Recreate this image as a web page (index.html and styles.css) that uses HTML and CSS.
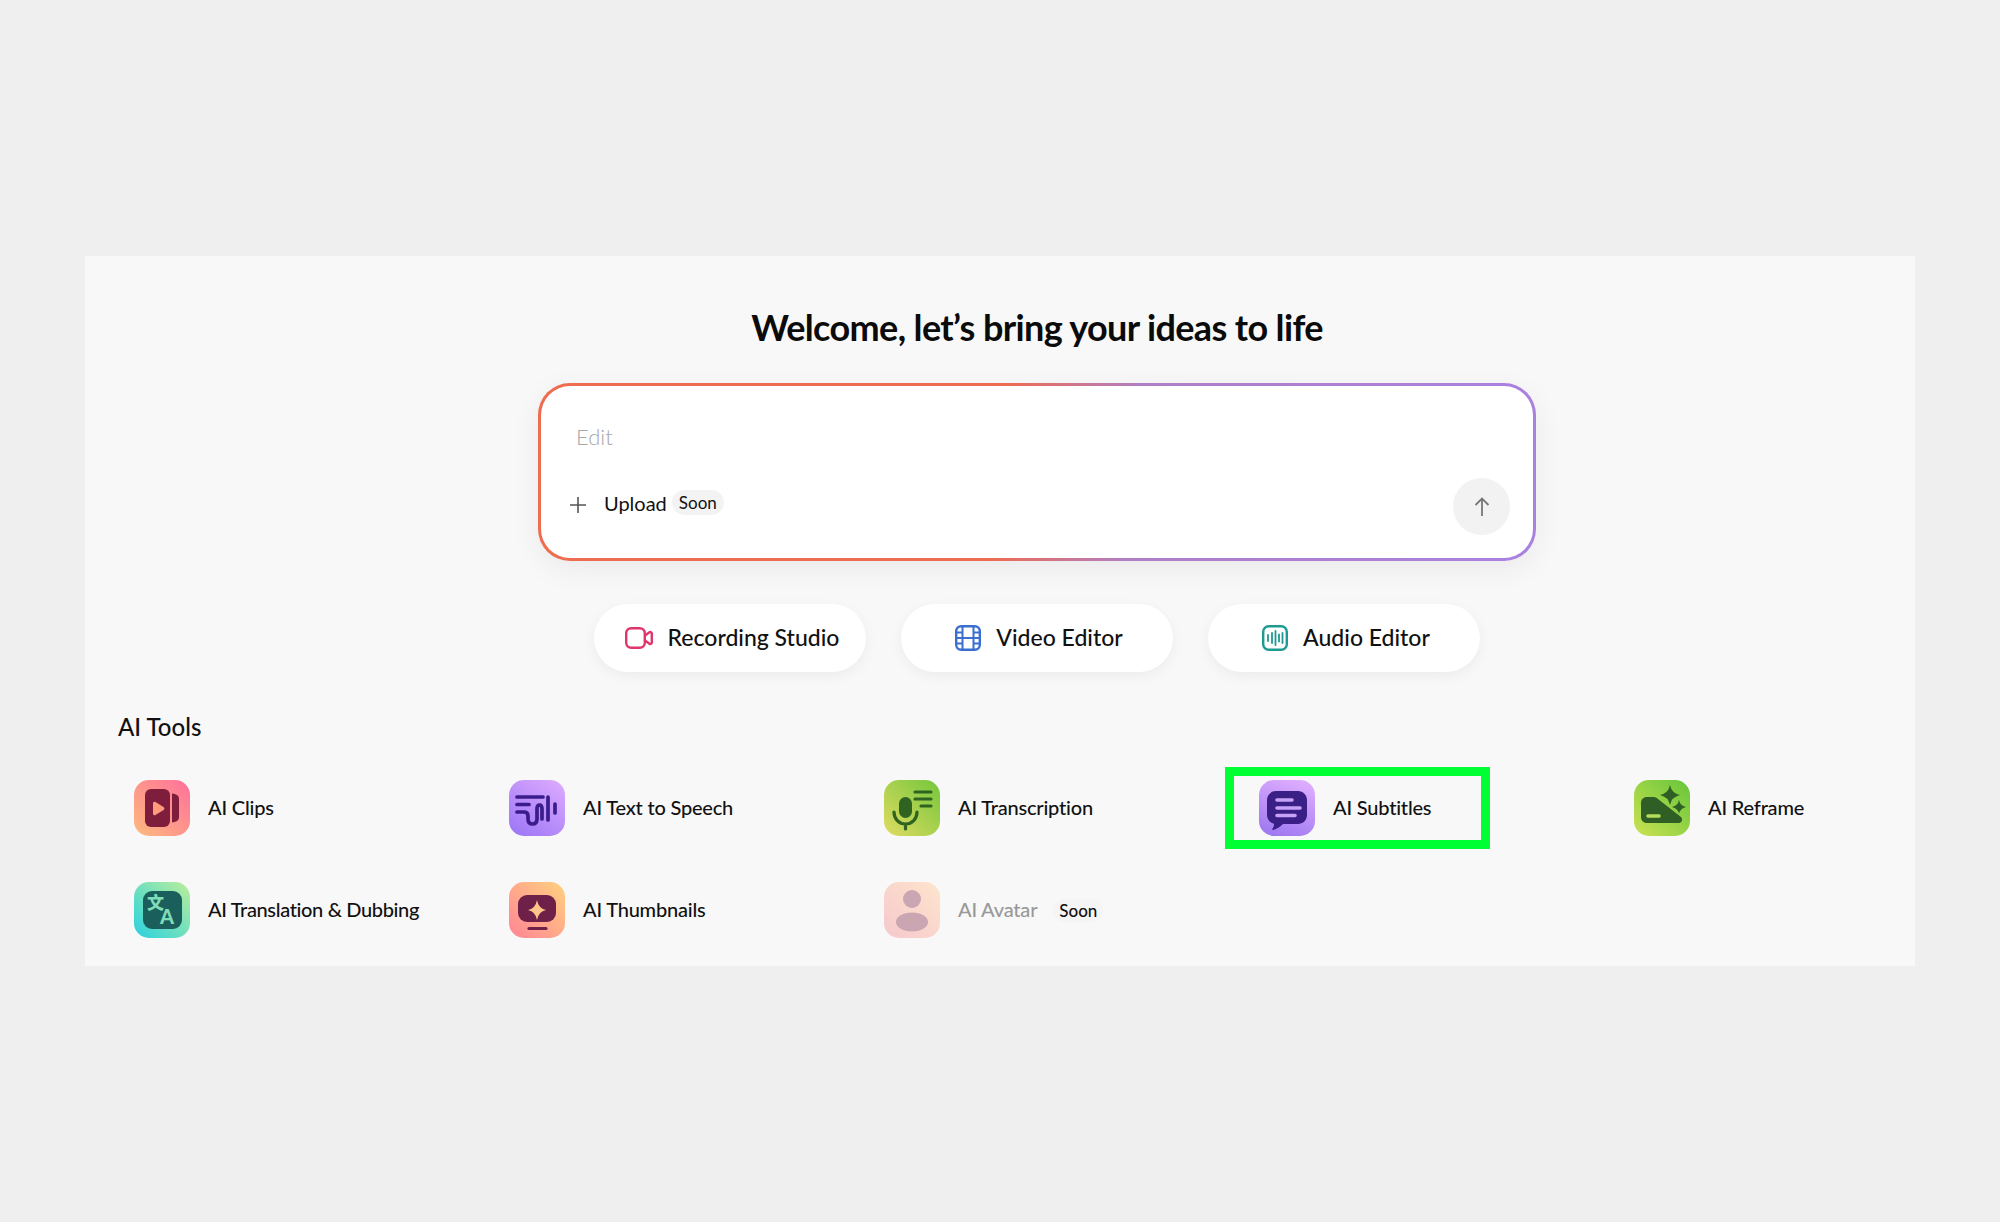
FILE: index.html
```html
<!DOCTYPE html>
<html lang="en">
<head>
    <meta charset="UTF-8">
    <title>Welcome</title>
    <link rel="stylesheet" href="styles.css">
</head>
<body>
    <div class="panel">
        <div class="hero">
            <h1>Welcome, let’s bring your ideas to life</h1>
            <div class="prompt">
                <div class="prompt-input">Edit</div>
                <div class="prompt-bottom">
                    <div class="upload">
                        <svg class="plus" width="18" height="18" viewBox="0 0 18 18"><path d="M9 1v16M1 9h16"/></svg>
                        <span>Upload</span>
                        <span class="soon">Soon</span>
                    </div>
                    <div class="send">
                        <svg width="16" height="20" viewBox="0 0 16 20"><path d="M8 19V1.500M1.500 8L8 1.500 14.500 8"/></svg>
                    </div>
                </div>
            </div>
            <div class="shortcuts">
                <div class="shortcut">
                    <svg class="rec" width="28" height="22" viewBox="0 0 28 22"><rect x="1.200" y="1.200" width="18.600" height="19.600" rx="5"/><path d="M20 8.500l4.500-3.200c1-.7 2.300 0 2.300 1.200v9c0 1.200-1.300 1.900-2.300 1.200L20 13.500"/></svg>
                    <span>Recording Studio</span>
                </div>
                <div class="shortcut">
                    <svg class="film" width="26" height="26" viewBox="0 0 26 26"><rect x="1.200" y="1.200" width="23.600" height="23.600" rx="5"/><path d="M7.500 1.500v23M18.500 1.500v23M7.500 13h11M1.500 7.500h6M1.500 13h6M1.500 18.500h6M18.500 7.500h6M18.500 13h6M18.500 18.500h6"/></svg>
                    <span>Video Editor</span>
                </div>
                <div class="shortcut">
                    <svg class="wave" width="26" height="26" viewBox="0 0 26 26"><rect x="1.200" y="1.200" width="23.600" height="23.600" rx="5.500"/><path d="M6 10v6M10 8v10M13.500 6v14M17 9.500v7M20.500 8v10"/></svg>
                    <span>Audio Editor</span>
                </div>
            </div>
        </div>

        <h2>AI Tools</h2>
        <div class="tools">
            <div class="tool">
                <div class="tool-icon clips">
                    <svg width="56" height="56" viewBox="0 0 56 56"><rect x="11" y="9" width="25" height="38" rx="6" fill="#7f1d3d"/><path d="M38 13.500c4 .3 7 1.800 7 5.500v18c0 3.700-3 5.200-7 5.500z" fill="#7f1d3d"/><path d="M19 23.500c0-1.500 1.300-2.300 2.500-1.600l8 5c1.200.7 1.200 2.400 0 3.100l-8 5c-1.200.7-2.500-.1-2.500-1.600z" fill="#ff9c7c"/></svg>
                </div>
                <span class="tool-name">AI Clips</span>
            </div>
            <div class="tool">
                <div class="tool-icon speech">
                    <svg width="56" height="56" viewBox="0 0 56 56"><path d="M8 17h26M8 24.500h12M8 32h7q4 0 4 4v3q0 5 4.500 5t4.500-5V29q0-4 2.500-4T33 29v10M39 17v23M46 24v9" fill="none" stroke="#3b1c8c" stroke-width="3.700" stroke-linecap="round"/></svg>
                </div>
                <span class="tool-name">AI Text to Speech</span>
            </div>
            <div class="tool">
                <div class="tool-icon transcription">
                    <svg width="56" height="56" viewBox="0 0 56 56"><rect x="15" y="17" width="13" height="21" rx="6.500" fill="#2f6320"/><path d="M10 32c0 7 5 12 11.500 12S33 39 33 32M21.500 44v5M31 12h16M31 19h16M37 26h10" fill="none" stroke="#2f6320" stroke-width="3.200" stroke-linecap="round"/></svg>
                </div>
                <span class="tool-name">AI Transcription</span>
            </div>
            <div class="tool">
                <div class="tool-icon subtitles">
                    <svg width="56" height="56" viewBox="0 0 56 56"><path d="M17 11h22c5 0 9 4 9 9v15c0 5-4 9-9 9H24c-3 3-6 5-10 6-1 0-1-.8-.5-1.500 1-1.200 1.500-2.500 1.500-4.700-4-1-7-4.500-7-8.800V20c0-5 4-9 9-9z" fill="#3a1f87"/><path d="M18 20h15M18 28h23M18 35.500h18" fill="none" stroke="#c7a2f7" stroke-width="3.600" stroke-linecap="round"/></svg>
                </div>
                <span class="tool-name">AI Subtitles</span>
                <div class="marker"></div>
            </div>
            <div class="tool">
                <div class="tool-icon reframe">
                    <svg width="56" height="56" viewBox="0 0 56 56"><path d="M13 17h6c2 0 3.500.5 5 2l23 18c2 2 1 6-2 6H13c-3.500 0-6-2.500-6-6V23c0-3.500 2.500-6 6-6z" fill="#2f5f25"/><path d="M36 5q1.500 8 10 10-8.500 2-10 10-1.500-8-10-10 8.500-2 10-10zM45 20q1 5.500 7 7-6 1.500-7 7-1-5.500-7-7 6-1.500 7-7z" fill="#2f5f25"/><path d="M14 36h11" fill="none" stroke="#b5dc5a" stroke-width="3.600" stroke-linecap="round"/></svg>
                </div>
                <span class="tool-name">AI Reframe</span>
            </div>
            <div class="tool">
                <div class="tool-icon dubbing">
                    <svg width="56" height="56" viewBox="0 0 56 56"><rect x="9" y="9" width="39" height="38" rx="9" fill="#1a5f5b"/><text x="13" y="27" class="glyph-cjk">文</text><text x="26" y="42" class="glyph-latin">A</text></svg>
                </div>
                <span class="tool-name tight">AI Translation &amp; Dubbing</span>
            </div>
            <div class="tool">
                <div class="tool-icon thumbs">
                    <svg width="56" height="56" viewBox="0 0 56 56"><rect x="9" y="13" width="38" height="27" rx="9" fill="#6e2049"/><path d="M28 18q1.500 8.500 9 10-7.500 1.500-9 10-1.500-8.500-9-10 7.500-1.500 9-10z" fill="#ffc58a"/><path d="M20 46.500h17" fill="none" stroke="#6e2049" stroke-width="3.200" stroke-linecap="round"/></svg>
                </div>
                <span class="tool-name">AI Thumbnails</span>
            </div>
            <div class="tool is-soon">
                <div class="tool-icon avatar">
                    <svg width="56" height="56" viewBox="0 0 56 56"><circle cx="28" cy="17" r="9" fill="#c9a6b2"/><ellipse cx="28" cy="40" rx="16" ry="9.500" fill="#c9a6b2"/></svg>
                </div>
                <span class="tool-name">AI Avatar</span>
                <span class="soon soon-tool">Soon</span>
            </div>
        </div>
    </div>
</body>
</html>
```

FILE: styles.css
```css
body {
    margin: 0;
    min-height: 1222px;
    padding: 0 85px;
    box-sizing: border-box;
    display: flex;
    align-items: center;
    font-family: "Lato", "Liberation Sans", sans-serif;
    background-color: #efefef;
    color: #111;
}
.panel {
    flex: 1;
    height: 710px;
    box-sizing: border-box;
    padding: 0 33px;
    background-color: #f8f8f8;
}
.hero {
    display: flex;
    flex-direction: column;
    align-items: center;
    padding-left: 74px;
}
h1 {
    margin: 49px 0 34px;
    font-size: 36px;
    line-height: 44px;
    font-weight: 700;
    letter-spacing: -0.63px;
    color: #0b0b0b;
}
.prompt {
    width: 998px;
    height: 178px;
    box-sizing: border-box;
    display: flex;
    flex-direction: column;
    justify-content: space-between;
    padding: 37px 23px 23px 28px;
    border: 3px solid transparent;
    border-radius: 32px;
    background:
        linear-gradient(#fff, #fff) padding-box,
        linear-gradient(95deg, #ee6c4f 0%, #ee6c4f 46%, #b07fc8 60%, #a981e0 100%) border-box;
    box-shadow: 0 8px 30px rgba(0,0,0,0.06);
}
.prompt-input {
    margin-left: 7px;
    font-size: 22px;
    line-height: 28px;
    font-weight: 300;
    color: #a8a8a8;
}
.prompt-bottom {
    display: flex;
    justify-content: space-between;
    align-items: center;
}
.upload {
    display: flex;
    align-items: center;
    font-size: 20px;
    margin-bottom: 8px;
}
.plus {
    margin-right: 17px;
    margin-top: 4px;
}
.plus path {
    fill: none;
    stroke: #555;
    stroke-width: 1.6;
}
.soon {
    margin-left: 5px;
    padding: 2px 7px;
    border-radius: 13px;
    background-color: #f3f3f3;
    font-size: 17px;
    line-height: 21px;
}
.send {
    width: 57px;
    height: 57px;
    border-radius: 50%;
    background-color: #f2f2f2;
    display: flex;
    align-items: center;
    justify-content: center;
}
.send path {
    fill: none;
    stroke: #777;
    stroke-width: 1.8;
}
.shortcuts {
    display: flex;
    gap: 35px;
    margin-top: 43px;
}
.shortcut {
    width: 272px;
    height: 68px;
    box-sizing: border-box;
    padding-left: 4px;
    display: flex;
    align-items: center;
    justify-content: center;
    gap: 15px;
    border-radius: 34px;
    background-color: #fff;
    box-shadow: 0 4px 14px rgba(0,0,0,0.05);
    font-size: 23px;
    font-weight: 500;
}
.shortcut span {
    margin-bottom: 3px;
}
.shortcut svg {
    fill: none;
    stroke-width: 2.4;
    stroke-linejoin: round;
}
.rec { stroke: #e0356b; }
.film { stroke: #3a6fd0; }
.wave { stroke: #1f9a92; }
.wave path { stroke-width: 1.800; stroke-linecap: round; }
.film path { stroke-width: 2; }
h2 {
    margin: 40px 0 38px;
    font-size: 24px;
    line-height: 30px;
    font-weight: 500;
}
.tools {
    display: grid;
    grid-template-columns: repeat(5, 264px);
    column-gap: 111px;
    row-gap: 46px;
}
.tool {
    position: relative;
    display: flex;
    align-items: center;
    gap: 18px;
    padding-left: 16px;
    font-size: 20px;
    font-weight: 500;
}
.tool-name {
    margin-bottom: 2px;
    letter-spacing: -0.2px;
    white-space: nowrap;
}
.tight {
    letter-spacing: -0.35px;
}
.tool-icon {
    width: 56px;
    height: 56px;
    border-radius: 15px;
    flex: none;
}
.tool-icon svg {
    display: block;
}
.clips { background: linear-gradient(45deg, #fdbb7e, #ff6f9b); }
.speech { background: linear-gradient(215deg, #deacff, #9a74f5); }
.transcription { background: linear-gradient(45deg, #e0dc62, #74c63c); }
.subtitles { background: linear-gradient(200deg, #e3b2ff, #9a74f0); }
.reframe { background: linear-gradient(45deg, #cbe252, #66c53a); }
.dubbing { background: linear-gradient(45deg, #28d2e0, #bcee9a); }
.thumbs { background: linear-gradient(45deg, #ff8496, #ffd27e); }
.avatar { background: linear-gradient(45deg, #f6c8cc, #fde5cc); }
.glyph-cjk {
    font-family: "Noto Sans CJK SC", sans-serif;
    font-size: 17px;
    font-weight: 900;
    fill: #7fdcb8;
}
.glyph-latin {
    font-family: "Lato", sans-serif;
    font-size: 20px;
    font-weight: 900;
    fill: #7fdcb8;
}
.is-soon {
    color: #999;
}
.soon-tool {
    margin-left: -2px;
    padding: 1px 6px;
    background-color: #f5f5f5;
    color: #111;
    font-size: 17px;
}
/* green annotation box around the marked tool */
.marker {
    position: absolute;
    left: -18px;
    top: -13px;
    width: 265px;
    height: 82px;
    box-sizing: border-box;
    border: 9px solid #00ff33;
}
```
